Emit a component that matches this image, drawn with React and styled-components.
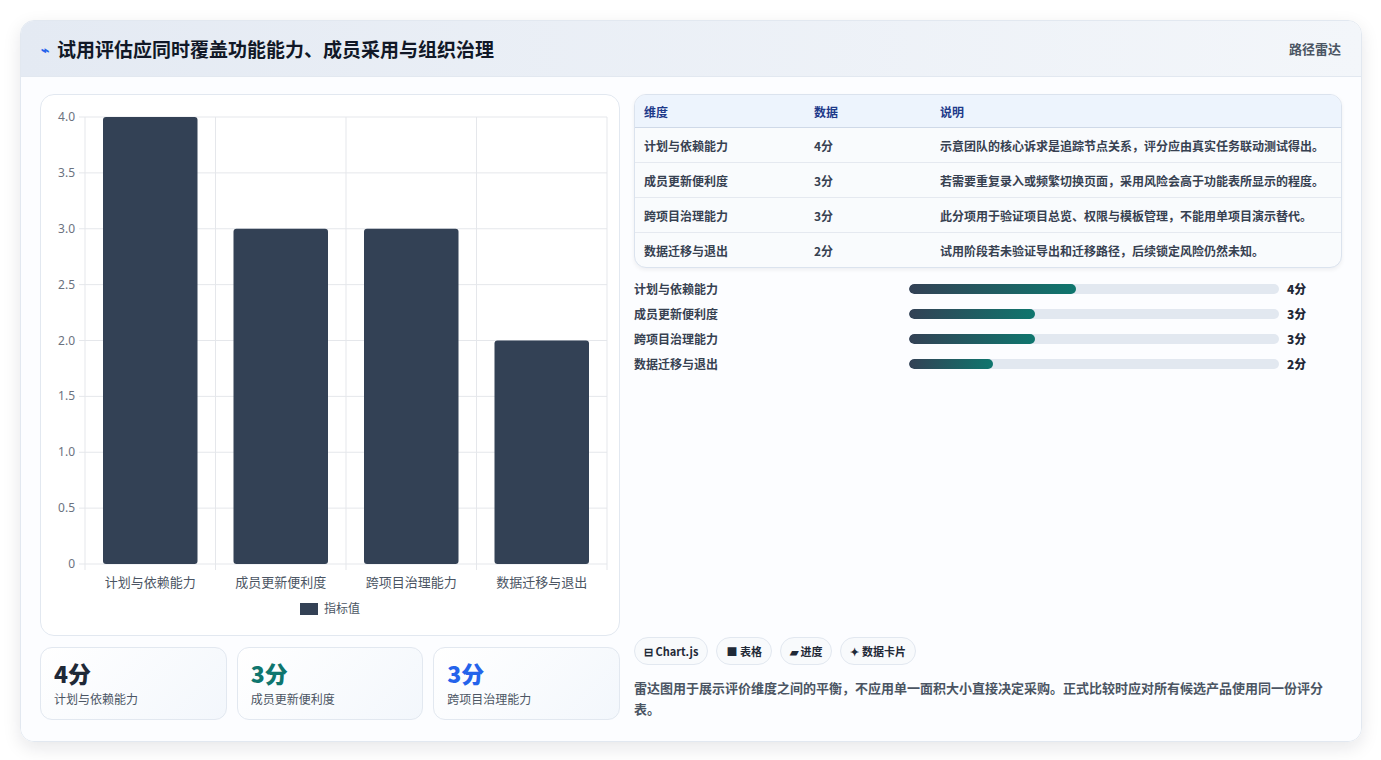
import React from 'react';
import styled, { createGlobalStyle } from 'styled-components';

const Global = createGlobalStyle`
  body { margin: 0; background: #fff; font-family: "Noto Sans CJK SC", "Noto Sans", sans-serif; }
`;

const rows = [
  { name: '计划与依赖能力', v: 4, note: '示意团队的核心诉求是追踪节点关系，评分应由真实任务联动测试得出。' },
  { name: '成员更新便利度', v: 3, note: '若需要重复录入或频繁切换页面，采用风险会高于功能表所显示的程度。' },
  { name: '跨项目治理能力', v: 3, note: '此分项用于验证项目总览、权限与模板管理，不能用单项目演示替代。' },
  { name: '数据迁移与退出', v: 2, note: '试用阶段若未验证导出和迁移路径，后续锁定风险仍然未知。' },
];

const Chart = () => {
  const x0 = 44, x1 = 566, yTop = 22, yBot = 469;
  const h = yBot - yTop;
  const cw = (x1 - x0) / 4;
  const ticks = [0, 0.5, 1, 1.5, 2, 2.5, 3, 3.5, 4];
  return (
    <svg width="578" height="540" style={{ display: 'block' }}>
      {ticks.map(t => {
        const y = yBot - (t / 4) * h;
        return (
          <g key={t}>
            <line x1={x0 - 6} x2={x1} y1={y} y2={y} stroke="#e5e7eb" />
            <text x={x0 - 10} y={y + 4} textAnchor="end" fontSize="12" fill="#6b7280" fontFamily="Noto Sans">{t === 0 ? '0' : t.toFixed(1)}</text>
          </g>
        );
      })}
      {[0, 1, 2, 3, 4].map(i => (
        <line key={i} x1={x0 + i * cw} x2={x0 + i * cw} y1={yTop} y2={yBot + 6} stroke="#e5e7eb" />
      ))}
      {rows.map((r, i) => {
        const bh = (r.v / 4) * h;
        return (
          <g key={r.name}>
            <rect x={x0 + i * cw + 18} y={yBot - bh} width={cw - 36} height={bh} rx="3" fill="#334155" />
            <text x={x0 + i * cw + cw / 2} y={yBot + 23} textAnchor="middle" fontSize="13" fill="#4b5563" fontFamily="Noto Sans CJK SC">{r.name}</text>
          </g>
        );
      })}
      <rect x="259" y="508" width="18" height="12" fill="#334155" />
      <text x="283" y="518" fontSize="12" fill="#4b5563" fontFamily="Noto Sans CJK SC">指标值</text>
    </svg>
  );
};

export default function App() {
  return (
    <Page>
      <Global />
      <Card>
        <Header>
          <Title><Spark>⌁</Spark>试用评估应同时覆盖功能能力、成员采用与组织治理</Title>
          <Tag>路径雷达</Tag>
        </Header>
        <Body>
          <Left>
            <ChartBox><Chart /></ChartBox>
            <Stats>
              <Stat><Big color="#1f2937">4分</Big><Small>计划与依赖能力</Small></Stat>
              <Stat><Big color="#0f766e">3分</Big><Small>成员更新便利度</Small></Stat>
              <Stat><Big color="#2563eb">3分</Big><Small>跨项目治理能力</Small></Stat>
            </Stats>
          </Left>
          <Right>
            <Table>
              <thead>
                <tr><Th>维度</Th><Th>数据</Th><Th>说明</Th></tr>
              </thead>
              <tbody>
                {rows.map(r => (
                  <tr key={r.name}><Td>{r.name}</Td><Td>{r.v}分</Td><Td>{r.note}</Td></tr>
                ))}
              </tbody>
            </Table>
            <Bars>
              {rows.map(r => (
                <BarRow key={r.name}>
                  <span>{r.name}</span>
                  <Track><Fill style={{ width: `${[0, 0, 22.7, 34, 45][r.v]}%` }} /></Track>
                  <b>{r.v}分</b>
                </BarRow>
              ))}
            </Bars>
            <Spacer />
            <Chips>
              <Chip>⊟ Chart.js</Chip>
              <Chip>■ 表格</Chip>
              <Chip>▰ 进度</Chip>
              <Chip>✦ 数据卡片</Chip>
            </Chips>
            <Note>雷达图用于展示评价维度之间的平衡，不应用单一面积大小直接决定采购。正式比较时应对所有候选产品使用同一份评分表。</Note>
          </Right>
        </Body>
      </Card>
    </Page>
  );
}

const Page = styled.div`
  padding: 20px 20px 20px 20px;
  height: 760px;
  box-sizing: border-box;
`;
const Card = styled.div`
  width: 1340px;
  height: 720px;
  border: 1px solid #e2e8f0;
  border-radius: 14px;
  background: linear-gradient(180deg, #fff, #f8fafc);
  box-shadow: 0 6px 18px rgba(15, 23, 42, 0.1);
  overflow: hidden;
  display: flex;
  flex-direction: column;
`;
const Header = styled.div`
  height: 55px;
  display: flex;
  align-items: center;
  justify-content: space-between;
  padding: 0 20px;
  background: linear-gradient(90deg, #e4eaf3, #f3f6fa);
  border-bottom: 1px solid #e2e8f0;
`;
const Title = styled.h1`
  margin: 0;
  font-size: 19px;
  font-weight: 700;
  color: #111827;
  display: flex;
  align-items: center;
  gap: 8px;
`;
const Spark = styled.span`
  color: #2563eb;
  font-size: 14px;
`;
const Tag = styled.span`
  font-size: 13px;
  color: #4b5563;
  font-weight: 600;
`;
const Body = styled.div`
  flex: 1;
  display: flex;
  gap: 14px;
  padding: 17px 19px 18px 19px;
  background: #fcfdff;
`;
const Left = styled.div`
  width: 580px;
  display: flex;
  flex-direction: column;
  gap: 11px;
`;
const ChartBox = styled.div`
  height: 542px;
  border: 1px solid #e2e8f0;
  border-radius: 14px;
  background: #fff;
  box-sizing: border-box;
  padding-top: 0;
`;
const Stats = styled.div`
  display: grid;
  grid-template-columns: repeat(3, 1fr);
  gap: 10px;
`;
const Stat = styled.div`
  height: 73px;
  box-sizing: border-box;
  border: 1px solid #e2e8f0;
  border-radius: 12px;
  background: linear-gradient(135deg, #fff, #f3f7fc);
  padding: 10px 13px;
`;
const Big = styled.div`
  font-size: 23px;
  font-weight: 800;
  color: ${p => p.color};
  line-height: 30px;
`;
const Small = styled.div`
  font-size: 12px;
  color: #4b5563;
  margin-top: 2px;
`;
const Right = styled.div`
  flex: 1;
  display: flex;
  flex-direction: column;
`;
const Table = styled.table`
  width: 100%;
  border-collapse: separate;
  border-spacing: 0;
  border: 1px solid #dbe3ee;
  border-radius: 12px;
  overflow: hidden;
  font-size: 12px;
  background: #f9fbfd;
  box-shadow: 0 2px 4px rgba(15, 23, 42, 0.06);
  tbody tr:not(:last-child) td { border-bottom: 1px solid #e5e9f0; }
`;
const Th = styled.th`
  text-align: left;
  font-weight: 700;
  color: #1e3a8a;
  background: #edf4fd;
  height: 32px;
  padding: 0 9px;
  border-bottom: 1px solid #cfd9e8;
  &:first-child { width: 152px; }
  &:nth-child(2) { width: 108px; }
`;
const Td = styled.td`
  height: 34px;
  padding: 0 9px;
  color: #374151;
  font-weight: 600;
`;
const Bars = styled.div`
  margin-top: 12px;
  display: flex;
  flex-direction: column;
  gap: 8px;
`;
const BarRow = styled.div`
  display: grid;
  grid-template-columns: 267px 370px 40px;
  gap: 8px;
  align-items: center;
  font-size: 12px;
  color: #374151;
  font-weight: 600;
  height: 17px;
  b { color: #1f2937; font-weight: 800; }
`;
const Track = styled.div`
  height: 10px;
  border-radius: 5px;
  background: #e2e8f0;
  overflow: hidden;
`;
const Fill = styled.div`
  height: 100%;
  border-radius: 5px;
  background: linear-gradient(90deg, #334155, #0f766e);
`;
const Spacer = styled.div`
  flex: 1;
`;
const Chips = styled.div`
  display: flex;
  gap: 8px;
`;
const Chip = styled.span`
  font-size: 11px;
  font-weight: 700;
  color: #1f2937;
  border: 1px solid #e2e8f0;
  background: #f8fafc;
  border-radius: 14px;
  padding: 6px 9px;
  line-height: 14px;
`;
const Note = styled.p`
  margin: 12px 0 4px;
  font-size: 13px;
  line-height: 21px;
  color: #4b5563;
  font-weight: 600;
`;
